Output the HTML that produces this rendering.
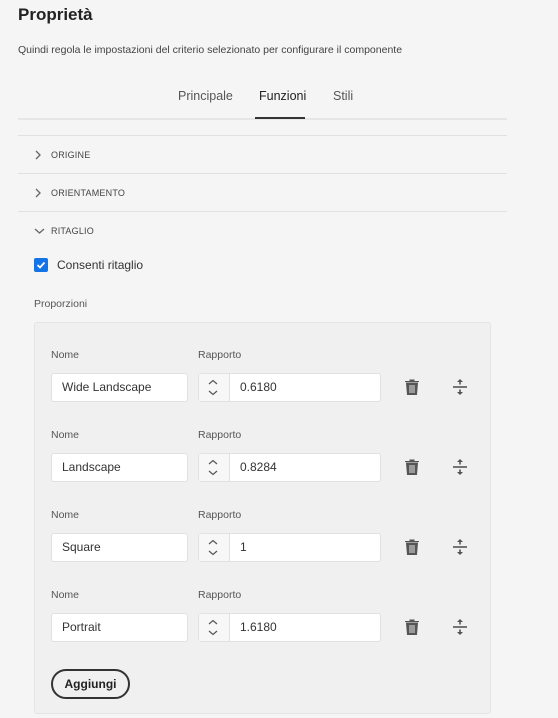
<!DOCTYPE html>
<html><head><meta charset="utf-8"><style>
body{margin:0;width:558px;height:718px;background:#f5f5f5;font-family:"Liberation Sans",sans-serif;color:#2c2c2c;position:relative;overflow:hidden}
.a{position:absolute}
.hr{position:absolute;left:18px;width:489px;height:1px;background:#e1e1e1}
.sec{position:absolute;left:51px;font-size:9px;color:#444;letter-spacing:.2px}
.chev{position:absolute;left:34px}
.lbl{position:absolute;font-size:10.5px;color:#555}
.inp{position:absolute;background:#fff;border:1px solid #e1e1e1;border-radius:3px;height:29px;box-sizing:border-box;font-size:12px;color:#333;line-height:27px}
.step{position:absolute;left:0;top:0;width:30px;height:27px;background:#f7f7f7;border-right:1px solid #e1e1e1}
</style></head><body>
<div class="a" style="left:18px;top:5px;font-size:17px;font-weight:bold;color:#222">Proprietà</div>
<div class="a" style="left:18px;top:44px;font-size:10.5px;color:#444">Quindi regola le impostazioni del criterio selezionato per configurare il componente</div>
<div class="a" style="left:178px;top:89px;font-size:12.5px;color:#555">Principale</div>
<div class="a" style="left:259px;top:89px;font-size:12.5px;color:#222">Funzioni</div>
<div class="a" style="left:333px;top:89px;font-size:12.5px;color:#555">Stili</div>
<div class="a" style="left:18px;top:118px;width:489px;height:2px;background:#e6e6e6"></div>
<div class="a" style="left:255px;top:117px;width:50px;height:2px;background:#333"></div>
<div class="hr" style="top:135px"></div>
<div class="hr" style="top:173px"></div>
<div class="hr" style="top:211px"></div>
<svg class="chev" style="top:150px" width="8" height="10"><path d="M2 1l4 4-4 4" fill="none" stroke="#666" stroke-width="1.3"/></svg>
<div class="sec" style="top:150px">ORIGINE</div>
<svg class="chev" style="top:188px" width="8" height="10"><path d="M2 1l4 4-4 4" fill="none" stroke="#666" stroke-width="1.3"/></svg>
<div class="sec" style="top:188px">ORIENTAMENTO</div>
<svg class="chev" style="top:227px" width="12" height="8"><path d="M1 2l4.5 4 4.5-4" fill="none" stroke="#666" stroke-width="1.3"/></svg>
<div class="sec" style="top:226px">RITAGLIO</div>
<svg class="a" style="left:34px;top:258px" width="14" height="14"><rect x="0" y="0" width="14" height="14" rx="2" fill="#1473e6"/><path d="M3.5 7l2.5 2.5 4.5-5" fill="none" stroke="#fff" stroke-width="1.8"/></svg>
<div class="a" style="left:57px;top:258px;font-size:12px;color:#333">Consenti ritaglio</div>
<div class="a" style="left:34px;top:298px;font-size:10.5px;color:#555">Proporzioni</div>
<div class="a" style="left:34px;top:322px;width:457px;height:392px;background:#f0f0f0;border:1px solid #e4e4e4;border-radius:3px;box-sizing:border-box"></div>

<div class="a" style="left:0;top:0">
<div class="lbl" style="left:51px;top:349px">Nome</div><div class="lbl" style="left:198px;top:349px">Rapporto</div>
<div class="inp" style="left:51px;top:373px;width:137px;padding-left:10px">Wide Landscape</div>
<div class="inp" style="left:198px;top:373px;width:183px;padding-left:41px"><div class="step"><svg width="30" height="27"><path d="M10 10l4-3.5 4 3.5M10 17l4 3.5 4-3.5" fill="none" stroke="#555" stroke-width="1.2"/></svg></div>0.6180</div>
<svg class="a" style="left:405px;top:379px" width="14" height="16"><path d="M0 2.5h14M5 2.5V1h4v1.5M1.5 4h11l-1 11.5h-9z" fill="#555" stroke="#555" stroke-width="1"/><path d="M5 6v8M7 6v8M9 6v8" stroke="#f0f0f0" stroke-width="0.9"/></svg>
<svg class="a" style="left:453px;top:378px" width="14" height="18"><path d="M0 9h14" stroke="#555" stroke-width="1.6"/><path d="M7 1l3 3H4zM7 17l3-3H4z" fill="#555"/><path d="M7 3v3.5M7 11.5v3.5" stroke="#555" stroke-width="1.6"/></svg>
</div>

<div class="a" style="left:0;top:80px">
<div class="lbl" style="left:51px;top:349px">Nome</div><div class="lbl" style="left:198px;top:349px">Rapporto</div>
<div class="inp" style="left:51px;top:373px;width:137px;padding-left:10px">Landscape</div>
<div class="inp" style="left:198px;top:373px;width:183px;padding-left:41px"><div class="step"><svg width="30" height="27"><path d="M10 10l4-3.5 4 3.5M10 17l4 3.5 4-3.5" fill="none" stroke="#555" stroke-width="1.2"/></svg></div>0.8284</div>
<svg class="a" style="left:405px;top:379px" width="14" height="16"><path d="M0 2.5h14M5 2.5V1h4v1.5M1.5 4h11l-1 11.5h-9z" fill="#555" stroke="#555" stroke-width="1"/><path d="M5 6v8M7 6v8M9 6v8" stroke="#f0f0f0" stroke-width="0.9"/></svg>
<svg class="a" style="left:453px;top:378px" width="14" height="18"><path d="M0 9h14" stroke="#555" stroke-width="1.6"/><path d="M7 1l3 3H4zM7 17l3-3H4z" fill="#555"/><path d="M7 3v3.5M7 11.5v3.5" stroke="#555" stroke-width="1.6"/></svg>
</div>

<div class="a" style="left:0;top:160px">
<div class="lbl" style="left:51px;top:349px">Nome</div><div class="lbl" style="left:198px;top:349px">Rapporto</div>
<div class="inp" style="left:51px;top:373px;width:137px;padding-left:10px">Square</div>
<div class="inp" style="left:198px;top:373px;width:183px;padding-left:41px"><div class="step"><svg width="30" height="27"><path d="M10 10l4-3.5 4 3.5M10 17l4 3.5 4-3.5" fill="none" stroke="#555" stroke-width="1.2"/></svg></div>1</div>
<svg class="a" style="left:405px;top:379px" width="14" height="16"><path d="M0 2.5h14M5 2.5V1h4v1.5M1.5 4h11l-1 11.5h-9z" fill="#555" stroke="#555" stroke-width="1"/><path d="M5 6v8M7 6v8M9 6v8" stroke="#f0f0f0" stroke-width="0.9"/></svg>
<svg class="a" style="left:453px;top:378px" width="14" height="18"><path d="M0 9h14" stroke="#555" stroke-width="1.6"/><path d="M7 1l3 3H4zM7 17l3-3H4z" fill="#555"/><path d="M7 3v3.5M7 11.5v3.5" stroke="#555" stroke-width="1.6"/></svg>
</div>

<div class="a" style="left:0;top:240px">
<div class="lbl" style="left:51px;top:349px">Nome</div><div class="lbl" style="left:198px;top:349px">Rapporto</div>
<div class="inp" style="left:51px;top:373px;width:137px;padding-left:10px">Portrait</div>
<div class="inp" style="left:198px;top:373px;width:183px;padding-left:41px"><div class="step"><svg width="30" height="27"><path d="M10 10l4-3.5 4 3.5M10 17l4 3.5 4-3.5" fill="none" stroke="#555" stroke-width="1.2"/></svg></div>1.6180</div>
<svg class="a" style="left:405px;top:379px" width="14" height="16"><path d="M0 2.5h14M5 2.5V1h4v1.5M1.5 4h11l-1 11.5h-9z" fill="#555" stroke="#555" stroke-width="1"/><path d="M5 6v8M7 6v8M9 6v8" stroke="#f0f0f0" stroke-width="0.9"/></svg>
<svg class="a" style="left:453px;top:378px" width="14" height="18"><path d="M0 9h14" stroke="#555" stroke-width="1.6"/><path d="M7 1l3 3H4zM7 17l3-3H4z" fill="#555"/><path d="M7 3v3.5M7 11.5v3.5" stroke="#555" stroke-width="1.6"/></svg>
</div>

<div class="a" style="left:51px;top:669px;width:79px;height:30px;border:2px solid #333;border-radius:15px;box-sizing:border-box;font-size:12px;font-weight:bold;text-align:center;line-height:26px;color:#222">Aggiungi</div>
</body></html>
